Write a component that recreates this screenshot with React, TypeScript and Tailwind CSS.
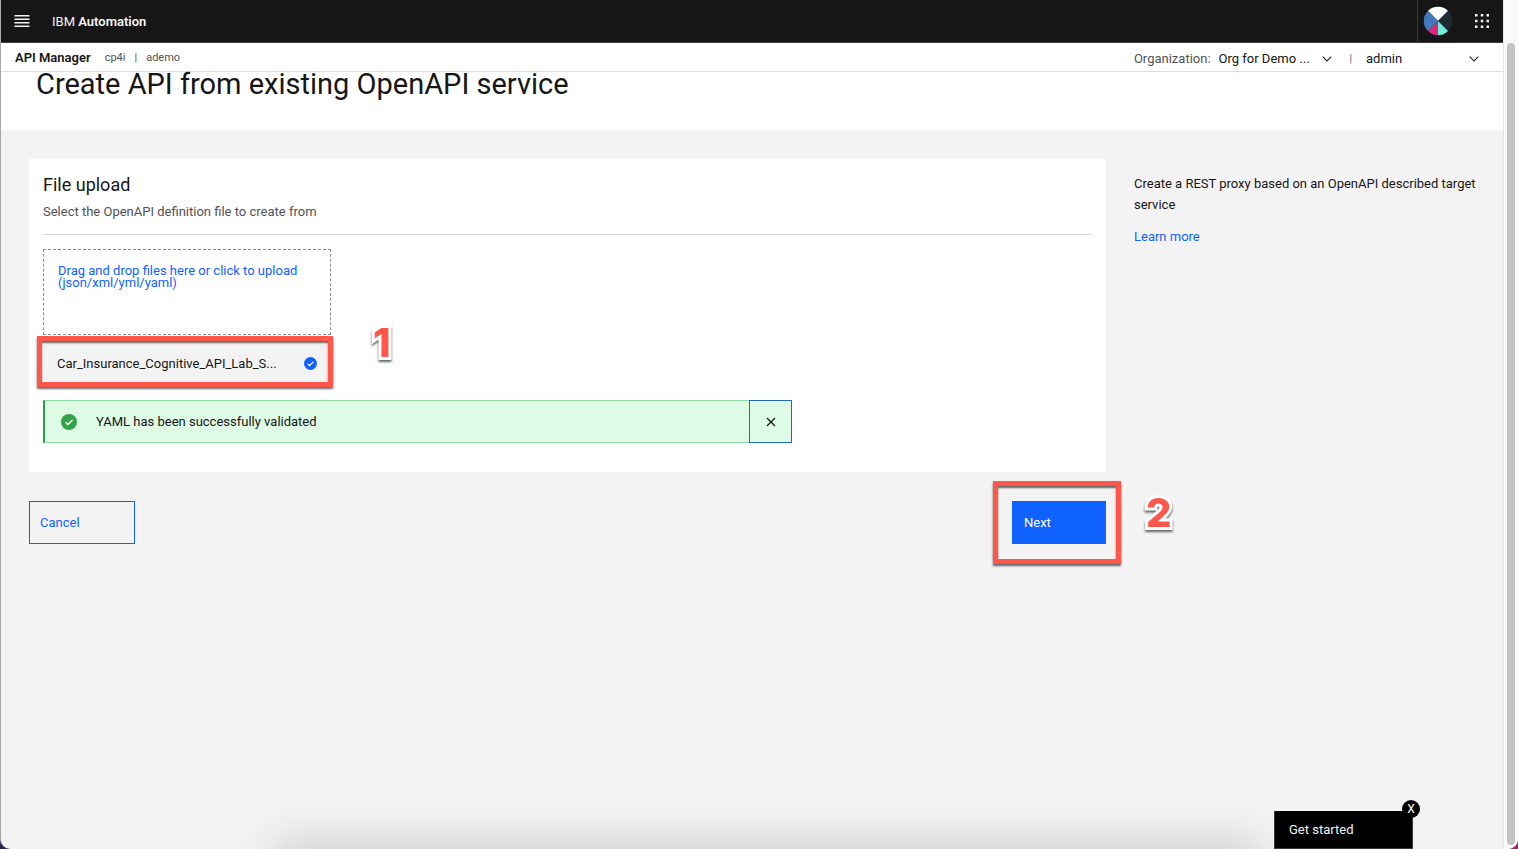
import type { ReactNode } from "react";

function Chevron() {
  return (
    <svg className="shrink-0" width="14" height="14" viewBox="0 0 16 16" fill="currentColor" aria-hidden="true">
      <path d="M8 11L2.7 5.7l.8-.8L8 9.4l4.5-4.5.8.8z" />
    </svg>
  );
}

function CheckFilled({ className, size }: { className: string; size: number }) {
  return (
    <svg className={className} width={size} height={size} viewBox="0 0 20 20" aria-hidden="true">
      <circle cx="10" cy="10" r="10" fill="currentColor" />
      <path d="M5.6 10.2l3 3 5.8-5.8" fill="none" stroke="white" strokeWidth="1.8" />
    </svg>
  );
}

function Avatar() {
  return (
    <svg width="30" height="30" viewBox="0 0 30 30" aria-hidden="true">
      <clipPath id="avatar-disc">
        <circle cx="15" cy="15" r="14.3" />
      </clipPath>
      <g clipPath="url(#avatar-disc)">
        <path d="M15 15L0 0H30z" fill="#fff" />
        <path d="M15 15L30 0V30z" fill="#1b2b34" />
        <path d="M15 15L30 30H15z" fill="#6eedd8" />
        <path d="M15 15V30H0z" fill="#dc267f" />
        <path d="M15 15L0 30V0z" fill="#4178be" />
      </g>
    </svg>
  );
}

function Callout({ className }: { className: string }) {
  return (
    <div
      className={`pointer-events-none absolute border-[5px] border-[#ff584a] shadow-[0_2px_2px_rgba(0,0,0,0.6),inset_0_2px_2px_rgba(0,0,0,0.6)] ${className}`}
    />
  );
}

function Step({ className, children }: { className: string; children: ReactNode }) {
  return (
    <span
      className={`pointer-events-none absolute text-[40px] leading-10 font-extrabold text-[#ff584a] [paint-order:stroke_fill] [-webkit-text-stroke:6px_white] [stroke-linejoin:round] [font-family:Inter,sans-serif] drop-shadow-[0_2px_1px_rgba(0,0,0,0.6)] ${className}`}
    >
      {children}
    </span>
  );
}

export default function App() {
  return (
    <div className="bg-[linear-gradient(90deg,#2d2257_50%,#9c2767_50%)]">
      <div className="relative flex min-h-screen overflow-hidden rounded-b-[10px] border-l border-[#a8a8a8] bg-[#f3f3f3] text-[13px] leading-5 text-[#161616] [font-family:Roboto,sans-serif]">
        <div className="flex min-w-0 flex-1 flex-col">
          <header className="flex h-[43px] items-center border-b border-[#393939] bg-[#161616] text-[#f3f3f3]">
            <button aria-label="Open menu" className="ml-[11px] flex size-5 items-center justify-center">
              <svg width="16" height="12" viewBox="0 0 16 12" fill="currentColor" aria-hidden="true">
                <path d="M.5 0h15v1.4H.5zM.5 3.5h15v1.4H.5zM.5 7h15v1.4H.5zM.5 10.5h15v1.4H.5z" />
              </svg>
            </button>
            <a href="#" className="ml-5 pt-0.5">
              IBM <b className="font-semibold">Automation</b>
            </a>
            <button aria-label="Profile" className="ml-auto flex h-full w-[43px] items-center border-l border-[#393939] pl-[5px]">
              <Avatar />
            </button>
            <button aria-label="App switcher" className="flex h-full w-[43px] items-center justify-center">
              <svg width="14" height="14" viewBox="0 0 14 14" fill="currentColor" aria-hidden="true">
                <path d="M0 0h2.5v2.5H0zM5.75 0h2.5v2.5h-2.5zM11.5 0H14v2.5h-2.5zM0 5.75h2.5v2.5H0zM5.75 5.75h2.5v2.5h-2.5zM11.5 5.75H14v2.5h-2.5zM0 11.5h2.5V14H0zM5.75 11.5h2.5V14h-2.5zM11.5 11.5H14V14h-2.5z" />
              </svg>
            </button>
          </header>

          <div className="flex h-[29px] items-center border-b border-[#dcdcdc] bg-white pt-0.5 pl-3.5">
            <b className="font-semibold">API Manager</b>
            <div className="ml-3.5 flex gap-[9px] text-[11px] text-[#525252]">
              <span>cp4i</span>
              <span>|</span>
              <span>ademo</span>
            </div>
            <div className="ml-auto flex items-center pt-0.5">
              <span className="text-[#525252]">Organization:</span>
              <button className="ml-2 flex w-[115px] items-center justify-between">
                Org for Demo ...
                <Chevron />
              </button>
              <span className="mr-3.5 ml-4 text-[10px] text-[#525252]">|</span>
              <button className="mr-[22px] flex w-[115px] items-center justify-between">
                admin
                <Chevron />
              </button>
            </div>
          </div>

          <div className="h-[58px] bg-white pl-[35px]">
            <h1 className="text-[29px] leading-6">Create API from existing OpenAPI service</h1>
          </div>

          <div className="flex gap-7 pt-[29px] pr-5 pb-14 pl-7">
            <main className="min-w-0 flex-1">
              <section className="bg-white p-3.5 pb-[29px]">
                <h2 className="text-lg leading-6">File upload</h2>
                <p className="mt-[5px] pb-3 text-[#525252]">Select the OpenAPI definition file to create from</p>
                <hr className="border-[#dcdcdc]" />
                <div className="relative mt-3.5 w-72">
                  <label className="block h-[86px] cursor-pointer border border-dashed border-[#8d8d8d] px-3.5 py-[15px] leading-3 text-[#0f62fe]">
                    Drag and drop files here or click to upload (json/xml/yml/yaml)
                    <input type="file" className="sr-only" />
                  </label>
                  <div className="mt-[7px] flex h-[43px] items-center justify-between bg-[#f3f3f3] px-3.5">
                    <span className="min-w-0 truncate">Car_Insurance_Cognitive_API_Lab_S...</span>
                    <CheckFilled className="text-[#0f62fe]" size={13} />
                  </div>
                  <Callout className="top-[87px] -right-0.5 -left-1.5 h-[51px]" />
                  <Step className="top-[74px] left-[330px]">1</Step>
                </div>
                <div role="status" className="mt-[15px] flex h-[43px] max-w-[749px] items-center border border-l-2 border-[#8fdba3] border-l-[#24a148] bg-[#defbe6]">
                  <CheckFilled className="ml-4 text-[#32a148]" size={16} />
                  <span className="ml-[19px]">YAML has been successfully validated</span>
                  <button aria-label="Dismiss" className="-my-px -mr-px ml-auto flex size-[43px] items-center justify-center border border-[#1a6fb8]">
                    <svg width="10" height="10" viewBox="0 0 10 10" stroke="currentColor" strokeWidth="1.3" aria-hidden="true">
                      <path d="M1 1l8 8M9 1L1 9" />
                    </svg>
                  </button>
                </div>
              </section>
              <div className="mt-[29px] flex justify-between">
                <button className="h-[43px] w-[106px] border border-[#0f62fe] px-2.5 text-left text-[#0f62fe]">Cancel</button>
                <div className="relative">
                  <button className="h-[43px] w-[94px] bg-[#0f62fe] px-3 text-left text-white">Next</button>
                  <Callout className="-top-5 -right-[15px] -bottom-5 -left-[19px]" />
                  <Step className="-top-2 left-[134px]">2</Step>
                </div>
              </div>
            </main>
            <aside className="w-[349px] pt-3.5">
              <p className="leading-[21px]">Create a REST proxy based on an OpenAPI described target service</p>
              <a href="#" className="mt-3 block text-[#0f62fe]">Learn more</a>
            </aside>
          </div>
        </div>

        <div className="flex w-[15px] border-l border-[#e6e6e6] bg-[#fafafa] pt-[43px] pb-1" aria-hidden="true">
          <div className="ml-[3px] w-2 rounded-full bg-[#c4c4c4]" />
        </div>

        <div className="pointer-events-none absolute top-full right-[260px] left-[275px] h-10 shadow-[0_0_50px_rgba(0,0,0,0.22)]" />
        <div className="absolute right-[105px] bottom-0 w-[139px]">
          <button className="h-[38px] w-full border-x border-b border-[#393939] bg-black px-3.5 text-left text-[#f3f3f3]">Get started</button>
          <button aria-label="Close" className="absolute -top-[11px] -right-[7px] flex size-[18px] items-center justify-center rounded-full bg-black text-xs text-white">
            X
          </button>
        </div>
      </div>
    </div>
  );
}
